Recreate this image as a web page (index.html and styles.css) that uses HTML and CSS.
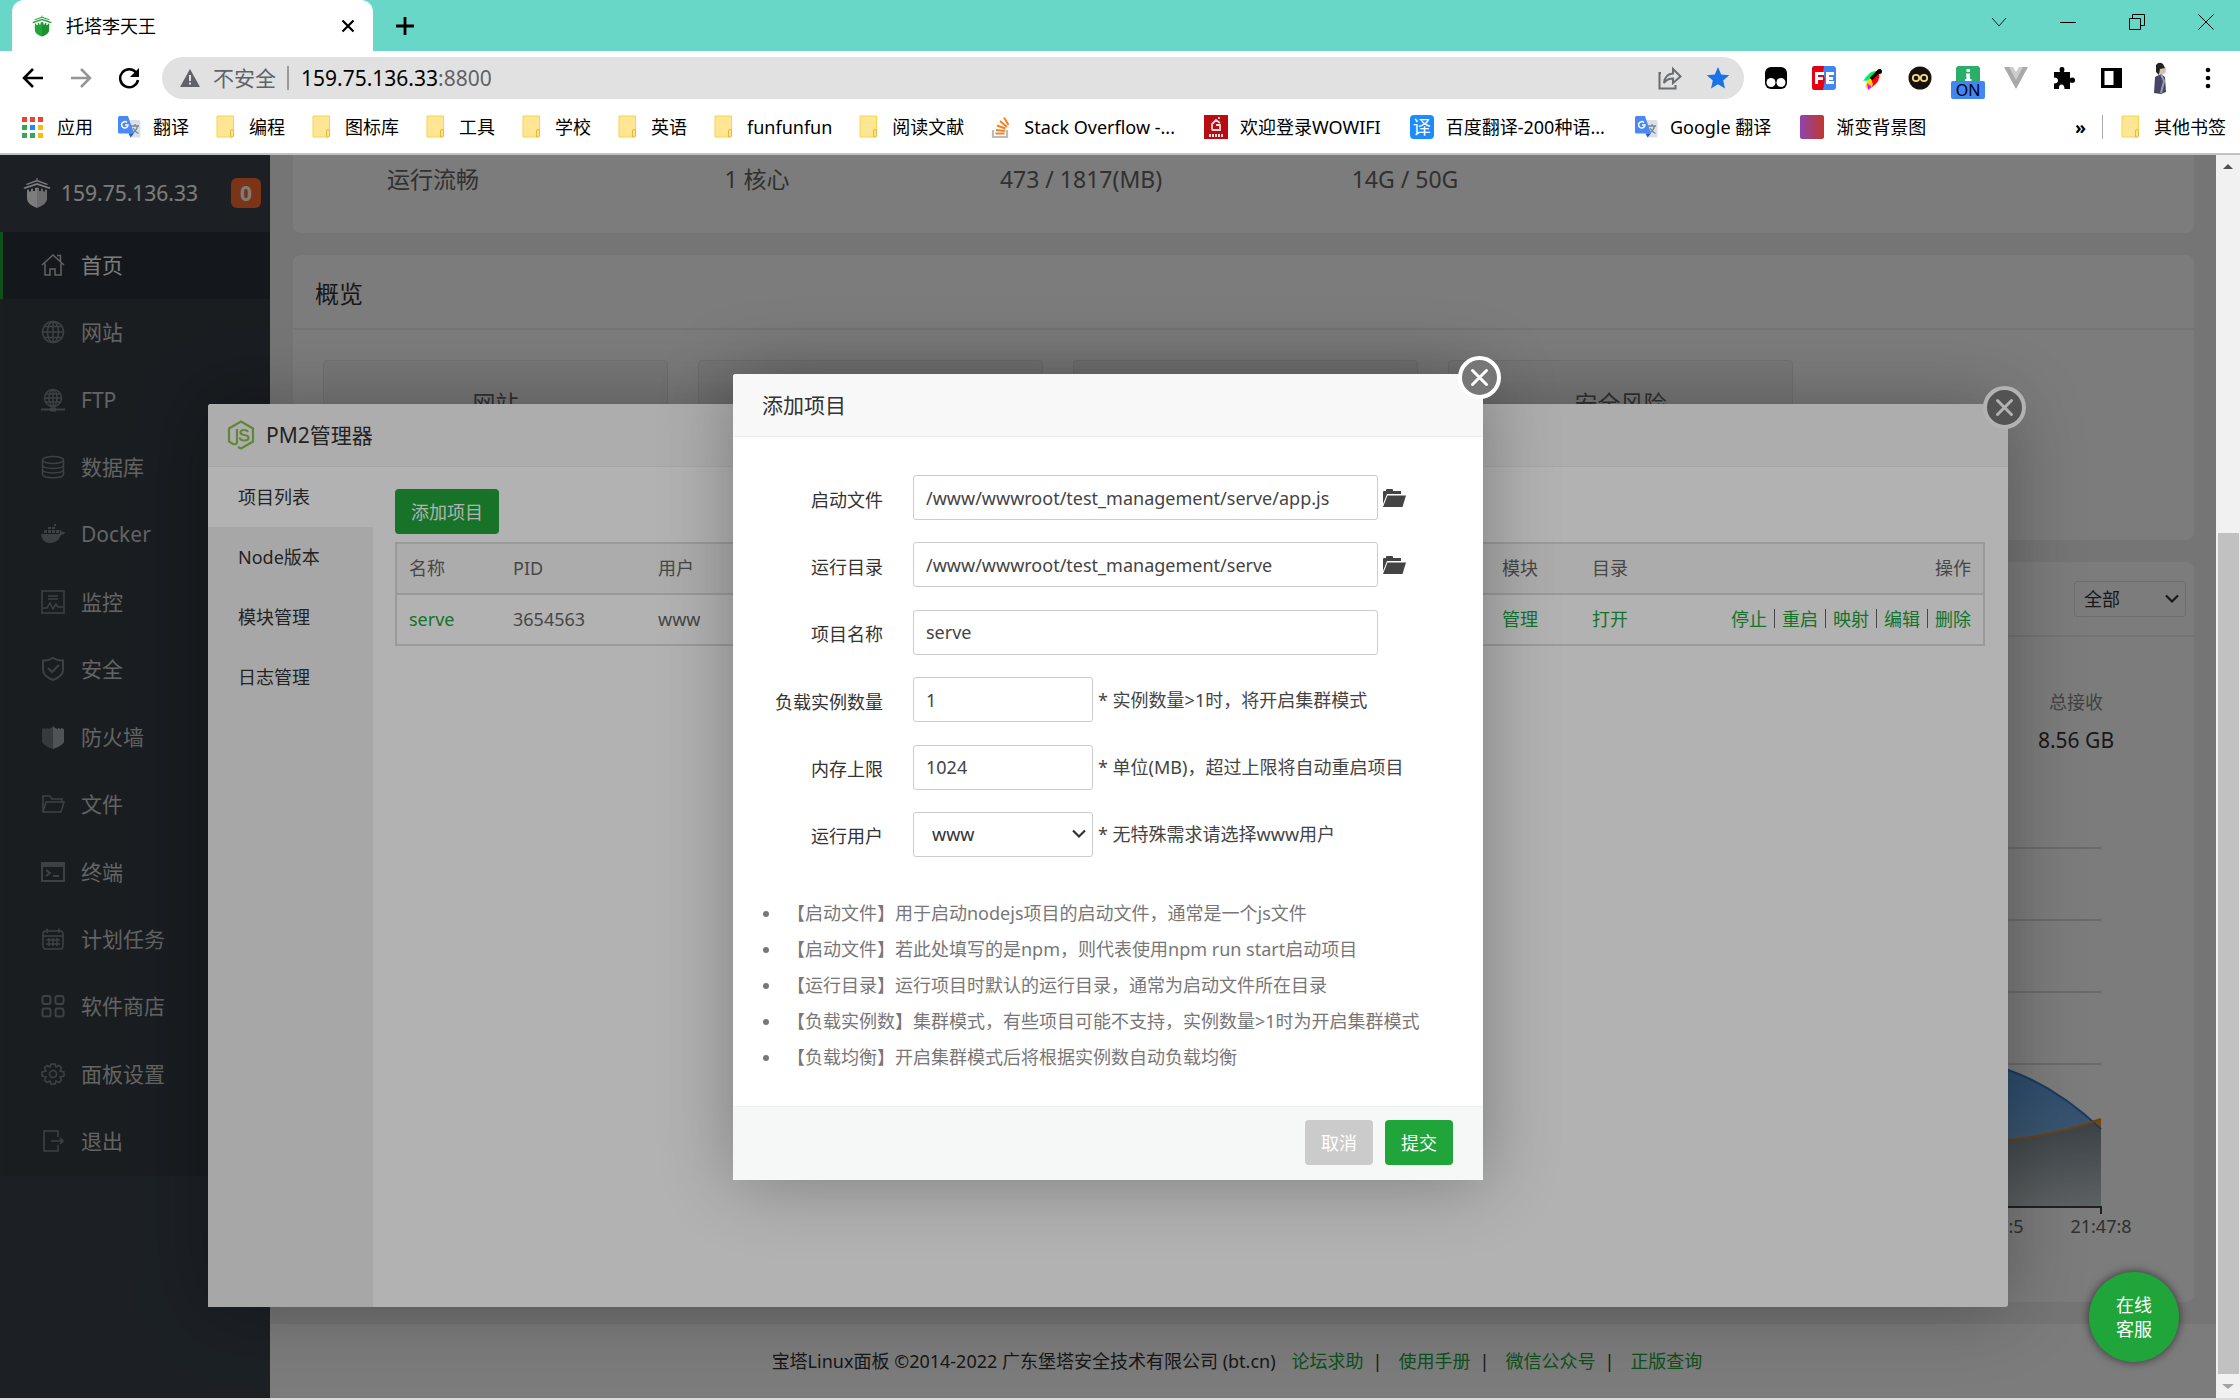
FILE: index.html
```html
<!DOCTYPE html>
<html lang="zh-CN">
<head>
  <meta charset="UTF-8" />
  <meta name="viewport" content="width=device-width, initial-scale=1.0"/>
  <title>托塔李天王</title>
  <link rel="stylesheet" href="styles.css">
</head>
<body>
  <!-- shared icons -->
  <svg class="defs" width="0" height="0">
    <symbol id="folder" viewBox="0 0 24 24">
      <path d="M4 1h16.500v20l-1 1H4z" fill="#ffe694" stroke="#f8d448" stroke-width="1"/>
      <path d="M17.500 22v-6q0-1.500 1.500-1.500T20.500 16v5l-1 1z" fill="#ffe28a" stroke="#e9b93a"/>
    </symbol>
    <symbol id="gtrans" viewBox="0 0 24 24">
      <path d="M9 5h13q1.500 0 1.500 1.500V21q0 1.500-1.500 1.500H14z" fill="#dcdfe3"/>
      <path d="M14 11h8M18 9v2M20.500 11q-1 5-5.500 7M16 13q2 4 5.500 5.500" fill="none" stroke="#76859c" stroke-width="1.300"/>
      <path d="M2.500 1h8.500l6 17.500H2.500Q1 18.500 1 17V2.500Q1 1 2.500 1z" fill="#4a89f3"/>
      <path d="M11.500 18.500H17l-3.500 4z" fill="#2a56c6"/>
      <path d="M10 7.500A3.200 3.200 0 1 0 11 10H8" fill="none" stroke="#fff" stroke-width="1.500"/>
    </symbol>
    <symbol id="tower" viewBox="0 0 28 30">
      <path d="M13.500 0h1v2L25 6l-1 1-10-3.500L4 7 3 6l10.500-4z"/>
      <path d="M14 5l13.500 4.500-1 1.500L14 7 1.500 11l-1-1.500z"/>
      <path d="M4 12l2-.5v2h2V11l2-.5V13h2v-3l2-.5 2 .5v3h2v-2.500l2 .5v2.500h2v-2l2 .5V21q0 5-10 9Q4 26 4 21z"/>
      <path d="M14 9.500l2 .5v3h2v-2.500l2 .5v2.500h2v-2l2 .5V21q0 5-10 9z" fill="#000" opacity="0.120"/>
    </symbol>
    <symbol id="open-folder" viewBox="0 0 24 20">
      <path d="M1 16V4q0-1 1-1h2V2q0-1 1-1h5q1 0 1 1v1h8v3H5z"/>
      <path d="M5.500 7.500H24L20.500 19H1z"/>
    </symbol>
    <symbol id="chevron" viewBox="0 0 16 10">
      <path d="M2 1.500l6 6 6-6" fill="none" stroke="currentColor" stroke-width="2.200"/>
    </symbol>
    <symbol id="close" viewBox="0 0 45 45">
      <circle cx="22.500" cy="22.500" r="19.500" fill="#777" stroke="#fff" stroke-width="4"/>
      <path d="M15.500 15.500l14 14M29.500 15.500l-14 14" stroke="#fff" stroke-width="3" stroke-linecap="round"/>
    </symbol>
  </svg>

  <header class="browser">
    <div class="tabstrip">
      <div class="tab">
        <svg class="tab-icon" viewBox="0 0 28 30" fill="#20a53a"><use href="#tower"/></svg>
        <span class="tab-title">托塔李天王</span>
        <button class="icon-btn" aria-label="关闭标签页"><svg width="14" height="14" viewBox="0 0 14 14" stroke="#000" stroke-width="2.200"><path d="M1.500 1.500l11 11M12.500 1.500l-11 11"/></svg></button>
      </div>
      <button class="icon-btn new-tab" aria-label="新标签页"><svg width="20" height="20" viewBox="0 0 20 20" stroke="#000" stroke-width="2.800"><path d="M10 1v18M1 10h18"/></svg></button>
      <div class="window-btns">
        <button class="icon-btn" aria-label="搜索标签页"><svg width="16" height="16" viewBox="0 0 16 16" fill="none" stroke="#123"><path d="M1 4l7 8 7-8"/></svg></button>
        <button class="icon-btn" aria-label="最小化"><svg width="16" height="16" viewBox="0 0 16 16" stroke="#000"><path d="M0 8.500h16"/></svg></button>
        <button class="icon-btn" aria-label="还原"><svg width="16" height="16" viewBox="0 0 16 16" fill="none" stroke="#000"><path d="M.5 4.500h11v11H.5zM3.500 4V.5h12v11H12"/></svg></button>
        <button class="icon-btn" aria-label="关闭"><svg width="16" height="16" viewBox="0 0 16 16" stroke="#000"><path d="M.5.500l15 15M15.500.500l-15 15"/></svg></button>
      </div>
    </div>

    <div class="toolbar">
      <button class="icon-btn" aria-label="后退"><svg width="22" height="20" viewBox="0 0 22 20" fill="none" stroke="#000" stroke-width="2.500"><path d="M21 10H2M11 1l-9 9 9 9"/></svg></button>
      <button class="icon-btn" aria-label="前进"><svg width="22" height="20" viewBox="0 0 22 20" fill="none" stroke="#959595" stroke-width="2.500"><path d="M1 10h19M11 1l9 9-9 9"/></svg></button>
      <button class="icon-btn" aria-label="刷新"><svg width="22" height="22" viewBox="0 0 22 22"><path d="M18.500 6A9 9 0 1 0 20 13" fill="none" stroke="#000" stroke-width="2.500"/><path d="M21 1v9h-9z"/></svg></button>
      <div class="address">
        <svg width="20" height="18" viewBox="0 0 20 18"><path d="M10 0l10 18H0z" fill="#5f6368"/><path d="M9 6h2v6H9zM9 13.500h2v2H9z" fill="#e1e1e1"/></svg>
        <span class="insecure">不安全</span>
        <span class="url">159.75.136.33<span class="port">:8800</span></span>
        <button class="icon-btn" aria-label="分享"><svg width="24" height="24" viewBox="0 0 24 24" fill="none" stroke="#6a6d70" stroke-width="2"><path d="M3 7H1.500v15.500h16V19"/><path d="M6 17q1-9 9-9.500V3l7.500 7.500L15 17v-4.500q-6 0-9 4.500z"/></svg></button>
        <button class="icon-btn" aria-label="收藏"><svg width="24" height="24" viewBox="0 0 24 24" fill="#1a73e8"><path d="M12 1l3.200 7.400 8 .8-6 5.300 1.800 7.900-7-4.200-7 4.200 1.800-7.900-6-5.300 8-.8z"/></svg></button>
      </div>
      <div class="extensions">
        <svg viewBox="0 0 24 24"><rect x="1" y="1" width="22" height="22" rx="6"/><circle cx="7" cy="16.500" r="4.500" fill="#fff"/><circle cx="17" cy="16.500" r="4.500" fill="#fff"/></svg>
        <svg viewBox="0 0 24 24"><rect width="24" height="24" rx="3" fill="#4285f4"/><path d="M3 0h9l-1 7 2 6-2 11H3q-3 0-3-3V3q0-3 3-3z" fill="#e60012"/><path d="M4.500 18V7.500H12M4.500 12.500H11M22 7.500h-6.500v9H22M16 12.500h5" fill="none" stroke="#fff" stroke-width="3"/></svg>
        <svg viewBox="0 0 24 24"><path d="M18 5Q9 5 3 15l8-2z" fill="#00e5e5"/><path d="M18 5q-7 0-9 3l-4 7 6-1z" fill="#00f050"/><path d="M19 7q2 8-7 14l-2-9z" fill="#f00"/><path d="M11 12l2 7-5 3-3-1 3-7z" fill="#ffd800"/><path d="M7 17l5 4-4 3z" fill="#f0f"/><path d="M19 5l-8 8" stroke="#000" stroke-width="3.500"/><circle cx="19.500" cy="5.500" r="2.500"/><path d="M19 5l2-2" stroke="#000"/></svg>
        <svg viewBox="0 0 24 24"><circle cx="12" cy="12" r="11.500" fill="#17110d"/><circle cx="8" cy="12" r="3.200" fill="none" stroke="#f5d77e" stroke-width="1.800"/><circle cx="16" cy="12" r="3.200" fill="none" stroke="#f5d77e" stroke-width="1.800"/></svg>
        <span class="ext-on">
          <svg viewBox="0 0 24 24"><rect width="24" height="24" rx="3" fill="#2bae66"/><path d="M10.500 3H14v3h-3.500zM10 7.500h4V13h1.500v3H9v-3h1.500z" fill="#fff"/></svg>
          <b>ON</b>
        </span>
        <svg viewBox="0 0 24 24"><path d="M0 1h7l5 9 5-9h7L12 23z" fill="#a9a9a9"/><path d="M5 1h4l3 5 3-5h4l-7 13z" fill="#ccc"/></svg>
        <svg viewBox="0 0 24 24"><path d="M2 6h6q-1.500-5 2-5t2 5h6v6q5-1.500 5 2.200t-5 2.200V23h-5.500q0-4.500-3-4.500T7 23H2v-5.500q4 0 4-3t-4-3z"/></svg>
        <svg viewBox="0 0 24 24"><path d="M1 2h21v20H1zM4.500 5v14h9V5z" fill-rule="evenodd"/></svg>
        <svg viewBox="0 0 16 32" class="avatar"><path d="M3 15l6-3 4 3 1 15-5 2-7-1z" fill="#474563"/><path d="M9 12l3 7-3 12" stroke="#9b99b3" stroke-width="2" fill="none"/><circle cx="10" cy="8" r="4" fill="#d9bfae"/><path d="M4 3q3-4 7-1l2 4-5 1-1 6-3-3z" fill="#222"/></svg>
        <svg viewBox="0 0 24 24"><circle cx="12" cy="4" r="2.300"/><circle cx="12" cy="12" r="2.300"/><circle cx="12" cy="20" r="2.300"/></svg>
      </div>
    </div>

    <nav class="bookmarks">
      <a href="#"><svg viewBox="0 0 24 24"><path d="M1 2h5v5H1z" fill="#ea4335"/><path d="M9 2h5v5H9z" fill="#ea4335"/><path d="M17 2h5v5h-5z" fill="#ea4335"/><path d="M1 10h5v5H1z" fill="#34a853"/><path d="M9 10h5v5H9z" fill="#1a8cff"/><path d="M17 10h5v5h-5z" fill="#fbbc04"/><path d="M1 18h5v5H1z" fill="#34a853"/><path d="M9 18h5v5H9z" fill="#34a853"/><path d="M17 18h5v5h-5z" fill="#fbbc04"/></svg>应用</a>
      <a href="#"><svg><use href="#gtrans"/></svg>翻译</a>
      <a href="#"><svg><use href="#folder"/></svg>编程</a>
      <a href="#"><svg><use href="#folder"/></svg>图标库</a>
      <a href="#"><svg><use href="#folder"/></svg>工具</a>
      <a href="#"><svg><use href="#folder"/></svg>学校</a>
      <a href="#"><svg><use href="#folder"/></svg>英语</a>
      <a href="#"><svg><use href="#folder"/></svg>funfunfun</a>
      <a href="#"><svg><use href="#folder"/></svg>阅读文献</a>
      <a href="#" class="site"><svg viewBox="0 0 24 24" fill="none"><path d="M5 15v7h14v-7" stroke="#bcbbbb" stroke-width="2.200"/><path d="M7.500 18.500h9M8 15l9 1M9 10.500l8.500 3M12 6l7 6M16 2.500l4.500 7.500" stroke="#f48024" stroke-width="2"/></svg>Stack Overflow -...</a>
      <a href="#" class="site"><svg viewBox="0 0 24 24"><path d="M0 0h24v24H0z" fill="#b80b12"/><path d="M16 8l-4-3-4 4v5q0 1 1 1h7v-5h-4M15 4V2" fill="none" stroke="#f6d9d9" stroke-width="1.800"/><path d="M5 20.500h14" stroke="#f6d9d9" stroke-width="3" stroke-dasharray="2 1"/></svg>欢迎登录WOWIFI</a>
      <a href="#" class="site"><span class="yi">译</span>百度翻译-200种语...</a>
      <a href="#" class="site"><svg><use href="#gtrans"/></svg>Google 翻译</a>
      <a href="#"><span class="gradient"></span>渐变背景图</a>
      <span class="more">»</span>
      <a href="#" class="other"><svg><use href="#folder"/></svg>其他书签</a>
    </nav>
  </header>

  <div class="viewport">
    <div class="panel">
      <aside class="sidebar">
        <div class="server">
          <svg width="28" height="30" fill="#fff"><use href="#tower"/></svg>
          <span>159.75.136.33</span>
          <b class="msg">0</b>
        </div>
        <nav class="menu">
          <a href="#" class="active"><svg viewBox="0 0 24 24"><path d="M1 12L12 2l11 10M4 10.500V22h5v-6h5v6h6V10.500M16 2.500h3.500V8"/></svg>首页</a>
          <a href="#"><svg viewBox="0 0 24 24"><circle cx="12" cy="12" r="10.500"/><path d="M12 1.500v21M1.500 12h21M3.500 6.500h17M3.500 17.500h17"/><ellipse cx="12" cy="12" rx="5.500" ry="10.500"/></svg>网站</a>
          <a href="#"><svg viewBox="0 0 24 24"><circle cx="12" cy="10" r="8.500"/><path d="M12 1.500v20M3.500 10h17M5 6h14M5 14h14"/><ellipse cx="12" cy="10" rx="4" ry="8.500"/><path d="M0 21.500h24" stroke-width="2"/><path d="M9 21.500h6" stroke-width="4"/></svg>FTP</a>
          <a href="#"><svg viewBox="0 0 24 24"><ellipse cx="12" cy="5" rx="10.500" ry="3.500"/><path d="M1.500 5v14c0 5 21 5 21 0V5M1.500 10c0 4.500 21 4.500 21 0M1.500 14.500c0 4.500 21 4.500 21 0"/></svg>数据库</a>
          <a href="#"><svg viewBox="0 0 24 24" class="solid"><path d="M0 12h18q1-1 .500-4 2 0 2.500 2h3q-1 3-4 3-3 8-11 8Q1 21 0 12zM3 8h3v3H3zM7 8h3v3H7zM11 8h3v3h-3zM15 8h3v3h-3zM7 5h3v2H7zM11 5h3v2h-3zM13 2h2v2h-2z"/></svg>Docker</a>
          <a href="#"><svg viewBox="0 0 24 24"><path d="M1 1h22v22H1zM7 6h10M7 9h10M2 18h4l3-5 3 6 3-5 2 3h5"/></svg>监控</a>
          <a href="#"><svg viewBox="0 0 24 24"><path d="M12 1q5 3 10 2.500V13q0 6-10 10Q2 19 2 13V3.500Q7 4 12 1z" stroke-width="2"/><path d="M7 11l4 4 7-7" stroke-width="2"/></svg>安全</a>
          <a href="#"><svg viewBox="0 0 24 24" class="solid"><path d="M1 4l3-1v1l3-1v1l3-1 2-2v23Q3 21 1 17z" opacity="0.800"/><path d="M12 1l2 2 3 1V3l3 1V3l3 1v13q-2 4-11 7z" fill="#a5aaad"/></svg>防火墙</a>
          <a href="#"><svg viewBox="0 0 24 24"><path d="M2 20V4h7l2 3h10v3M2 20l3-10h18l-3 10z"/></svg>文件</a>
          <a href="#"><svg viewBox="0 0 24 24"><path d="M1 3h22v18H1z" stroke-width="2"/><path d="M1 5h22" stroke-width="4"/><path d="M5 10l4 3-4 3M12 16h6" stroke-width="2"/></svg>终端</a>
          <a href="#"><svg viewBox="0 0 24 24"><rect x="2" y="4" width="20" height="18" rx="3"/><path d="M2 9h20M6 1.500V6M18 1.500V6M5 13h14M5 17h14M8 11v8M12 11v8M16 11v8"/></svg>计划任务</a>
          <a href="#"><svg viewBox="0 0 24 24"><g stroke-width="2"><rect x="1.500" y="2" width="8" height="8" rx="2"/><rect x="14.500" y="2" width="8" height="8" rx="2"/><rect x="1.500" y="14.500" width="8" height="8" rx="2"/><rect x="14.500" y="14.500" width="8" height="8" rx="2"/></g></svg>软件商店</a>
          <a href="#"><svg viewBox="0 0 24 24"><path d="M10 2h4l1 3 3-1.500L20.500 6 19 9l4 1v4l-4 1 1.500 3-2.500 2.500L15 19l-1 3h-4l-1-3-3 1.500L3.500 18 5 15l-4-1v-4l4-1-1.500-3L6 3.500 9 5z"/><circle cx="12" cy="12" r="3.500"/></svg>面板设置</a>
          <a href="#"><svg viewBox="0 0 24 24"><path d="M17 8V2H3v20h14v-6M10 12h12M19 9l3 3-3 3"/></svg>退出</a>
        </nav>
      </aside>

      <main class="main">
        <section class="card load">
          <div>运行流畅</div>
          <div>1 核心</div>
          <div>473 / 1817(MB)</div>
          <div>14G / 50G</div>
        </section>

        <section class="card">
          <h2 class="card-head">概览</h2>
          <div class="overview">
            <div>网站</div>
            <div></div>
            <div></div>
            <div>安全风险</div>
          </div>
        </section>

        <section class="card flow">
          <div class="card-head">
            <div class="select net">
              <select aria-label="网卡"><option>全部</option></select>
              <svg width="16" height="10"><use href="#chevron"/></svg>
            </div>
          </div>
          <div class="total">
            <span>总接收</span>
            <strong>8.56 GB</strong>
          </div>
          <svg class="chart" width="400" height="420" viewBox="0 0 400 420">
            <defs>
              <linearGradient id="down" x1="0" y1="0" x2="0" y2="1"><stop offset="0" stop-color="#5a9ce0"/><stop offset="1" stop-color="#9cc6ee"/></linearGradient>
              <linearGradient id="both" x1="0" y1="0" x2="0" y2="1"><stop offset="0" stop-color="#79878f"/><stop offset="1" stop-color="#bfc8ca"/></linearGradient>
            </defs>
            <path d="M0 28h341M0 100h341M0 172h341M0 244h341" stroke="#ddd" stroke-width="2"/>
            <path d="M0 250H248Q295 266 341 309V387H0z" fill="url(#down)"/>
            <path d="M0 320H248Q296 315 341 299V387H0z" fill="url(#both)"/>
            <path d="M329 301l12-2v10z" fill="#f0952a"/>
            <path d="M0 250H248Q295 266 341 309" fill="none" stroke="#3a78c0" stroke-width="2"/>
            <path d="M0 320H248Q296 315 341 299" fill="none" stroke="#d98a2b" stroke-width="2"/>
            <path d="M0 387h341v7" fill="none" stroke="#444" stroke-width="2"/>
            <text x="233" y="413" text-anchor="middle">21:47:5</text>
            <text x="341" y="413" text-anchor="middle">21:47:8</text>
          </svg>
        </section>

        <footer class="footer">
          <span>宝塔Linux面板 ©2014-2022 广东堡塔安全技术有限公司 (bt.cn)</span>
          <a href="#">论坛求助</a>|
          <a href="#">使用手册</a>|
          <a href="#">微信公众号</a>|
          <a href="#">正版查询</a>
        </footer>
      </main>

      <div class="shade"></div>
      <div class="layer pm2">
        <button class="layer-close" aria-label="关闭"><svg width="45" height="45"><use href="#close"/></svg></button>
        <h3 class="layer-title">
          <svg width="28" height="30" viewBox="0 0 28 30" fill="none" stroke="#8cc152" stroke-width="2.200"><path d="M11 27l3 1.500 12-7V8.500L14 1.500 2 8.500v13l4 2.500q4 1 4-2V9"/><path d="M21 12q-1-2-4-2-3.500 0-3.500 2.500 0 2 3.500 2.500 4.500.5 4.500 3T17 20.500q-4 0-4-3"/></svg>
          PM2管理器
        </h3>
        <div class="pm2-body">
          <nav class="pm2-nav">
            <a href="#" class="on">项目列表</a>
            <a href="#">Node版本</a>
            <a href="#">模块管理</a>
            <a href="#">日志管理</a>
          </nav>
          <div class="pm2-main">
            <button class="btn">添加项目</button>
            <table>
              <thead>
                <tr><th class="c-name">名称</th><th class="c-pid">PID</th><th>用户</th><th class="c-mod">模块</th><th class="c-dir">目录</th><th class="c-ops">操作</th></tr>
              </thead>
              <tbody>
                <tr>
                  <td><a href="#">serve</a></td>
                  <td>3654563</td>
                  <td>www</td>
                  <td><a href="#">管理</a></td>
                  <td><a href="#">打开</a></td>
                  <td class="c-ops">
                    <div class="ops"><a href="#">停止</a><i></i><a href="#">重启</a><i></i><a href="#">映射</a><i></i><a href="#">编辑</a><i></i><a href="#">删除</a></div>
                  </td>
                </tr>
              </tbody>
            </table>
          </div>
        </div>
      </div>

      <div class="shade"></div>
      <form class="layer add">
        <button type="button" class="layer-close" aria-label="关闭"><svg width="45" height="45"><use href="#close"/></svg></button>
        <h3 class="layer-title">添加项目</h3>
        <div class="fields">
          <div class="line">
            <label for="run">启动文件</label>
            <input type="text" id="run" value="/www/wwwroot/test_management/serve/app.js">
            <button type="button" class="icon-btn pick" aria-label="选择文件"><svg width="24" height="20"><use href="#open-folder"/></svg></button>
          </div>
          <div class="line">
            <label for="path">运行目录</label>
            <input type="text" id="path" value="/www/wwwroot/test_management/serve">
            <button type="button" class="icon-btn pick" aria-label="选择目录"><svg width="24" height="20"><use href="#open-folder"/></svg></button>
          </div>
          <div class="line">
            <label for="pname">项目名称</label>
            <input type="text" id="pname" value="serve">
          </div>
          <div class="line">
            <label for="count">负载实例数量</label>
            <input type="text" id="count" class="short" value="1">
            <span class="hint">* 实例数量&gt;1时，将开启集群模式</span>
          </div>
          <div class="line">
            <label for="memory">内存上限</label>
            <input type="text" id="memory" class="short" value="1024">
            <span class="hint">* 单位(MB)，超过上限将自动重启项目</span>
          </div>
          <div class="line">
            <label for="user">运行用户</label>
            <div class="select short">
              <select id="user"><option>www</option><option>root</option></select>
              <svg width="16" height="10"><use href="#chevron"/></svg>
            </div>
            <span class="hint">* 无特殊需求请选择www用户</span>
          </div>
        </div>
        <ul class="help">
          <li>【启动文件】用于启动nodejs项目的启动文件，通常是一个js文件</li>
          <li>【启动文件】若此处填写的是npm，则代表使用npm run start启动项目</li>
          <li>【运行目录】运行项目时默认的运行目录，通常为启动文件所在目录</li>
          <li>【负载实例数】集群模式，有些项目可能不支持，实例数量&gt;1时为开启集群模式</li>
          <li>【负载均衡】开启集群模式后将根据实例数自动负载均衡</li>
        </ul>
        <div class="actions">
          <button type="button" class="btn cancel">取消</button>
          <button type="submit" class="btn">提交</button>
        </div>
      </form>

      <button class="service">在线<br>客服</button>
    </div>

    <div class="scrollbar">
      <svg width="24" height="24" viewBox="0 0 24 24"><path d="M7 14l5-5 5 5z" fill="#505050"/></svg>
      <div class="thumb"></div>
      <svg width="24" height="24" viewBox="0 0 24 24"><path d="M6 10l6 5 6-5z" fill="#a3a3a3"/></svg>
    </div>
  </div>
</body>
</html>
```

FILE: styles.css
```css
:root {
  --green: #20a53a;
  --strip: #68d7c8;
  --text: #333;
  --muted: #666;
  --line: #ccc;
}

* {
  box-sizing: border-box;
  margin: 0;
  padding: 0;
}

html, body {
  height: 100%;
}

body {
  display: flex;
  flex-direction: column;
  overflow: hidden;
  font-family: "Noto Sans", "Noto Sans CJK SC", sans-serif;
  font-size: 18px;
  line-height: 24px;
  color: var(--text);
  background: #dcdcdc;
}

button, input, select {
  font: inherit;
  color: inherit;
}

a {
  color: var(--green);
  text-decoration: none;
}

.defs {
  position: absolute;
}

.icon-btn {
  display: flex;
  align-items: center;
  justify-content: center;
  border: none;
  background: none;
  cursor: pointer;
}

/* browser frame */
.browser {
  flex: none;
  background: #fff;
  color: #000;
  border-bottom: 2px solid #c2c2c2;
}

.tabstrip {
  display: flex;
  align-items: center;
  height: 51px;
  padding-left: 12px;
  background: var(--strip);
}

.tab {
  display: flex;
  align-items: center;
  width: 361px;
  height: 51px;
  padding: 0 18px 0 20px;
  background: #fff;
  border-radius: 12px 12px 0 0;
}

.tab-icon {
  width: 20px;
  height: 22px;
  margin-right: 14px;
}

.tab-title {
  flex: 1;
}

.new-tab {
  margin-left: 22px;
}

.window-btns {
  display: flex;
  align-self: flex-start;
  margin-left: auto;
}

.window-btns .icon-btn {
  width: 69px;
  height: 43px;
}

.toolbar {
  display: flex;
  align-items: center;
  gap: 26px;
  height: 54px;
  padding: 0 20px 0 22px;
}

.address {
  display: flex;
  align-items: center;
  flex: 1;
  height: 42px;
  margin-right: 10px;
  margin-left: -4px;
  padding: 0 14px 0 18px;
  border-radius: 21px;
  background: #e1e1e1;
  font-size: 21px;
}

.insecure {
  margin-left: 13px;
  padding-right: 11px;
  border-right: 2px solid #9a9a9a;
  color: #5f6368;
}

.url {
  flex: 1;
  margin-left: 12px;
}

.port {
  color: #5f6368;
}

.address .icon-btn {
  margin-left: 24px;
}

.extensions {
  display: flex;
  align-items: center;
  gap: 24px;
  margin-left: -16px;
}

.extensions svg {
  width: 24px;
  height: 24px;
}

.extensions .avatar {
  height: 32px;
}

.ext-on {
  position: relative;
  height: 24px;
}

.ext-on b {
  position: absolute;
  top: 15px;
  left: -5px;
  width: 34px;
  height: 18px;
  border-radius: 2px;
  background: #4285f4;
  font-size: 16px;
  font-weight: normal;
  line-height: 19px;
  text-align: center;
}

.bookmarks {
  display: flex;
  align-items: center;
  gap: 24px;
  height: 48px;
  padding: 0 14px 5px 21px;
  white-space: nowrap;
}

.bookmarks a {
  display: flex;
  align-items: center;
  gap: 12px;
  color: #000;
}

.bookmarks svg {
  width: 24px;
  height: 24px;
}

.bookmarks .site {
  padding-right: 5px;
}

.yi {
  width: 24px;
  border-radius: 4px;
  background: #1a8cff;
  color: #fff;
  text-align: center;
}

.gradient {
  width: 24px;
  height: 24px;
  border-radius: 2px;
  background: linear-gradient(90deg, #8e44ad, #c0392b);
}

.more {
  margin-left: auto;
  margin-right: -8px;
  font-weight: bold;
}

.other {
  padding-left: 15px;
  border-left: 1px solid #aaa;
}

/* page area */
.viewport {
  display: flex;
  flex: 1;
  min-height: 0;
  margin-bottom: 2px;
}

.panel {
  position: relative;
  display: flex;
  flex: 1;
  overflow: hidden;
  background: #f1f1f1;
}

.scrollbar {
  display: flex;
  flex-direction: column;
  width: 24px;
  background: #f1f1f1;
}

.thumb {
  flex: none;
  height: 841px;
  margin: auto 1px 0 2px;
  background: #c1c1c1;
}

.sidebar {
  width: 270px;
  background: #3c444d;
}

.server {
  display: flex;
  align-items: center;
  height: 77px;
  padding: 0 9px 2px 23px;
  color: #fff;
  font-size: 21px;
}

.server svg {
  margin-right: 10px;
}

.msg {
  width: 30px;
  margin-left: auto;
  border-radius: 6px;
  background: #ff6c2f;
  line-height: 30px;
  text-align: center;
}

.menu {
  display: grid;
  grid-auto-rows: 1fr;
  height: 944px;
  background: #353d44;
}

.menu a {
  display: flex;
  align-items: center;
  gap: 16px;
  padding: 0 0 2px 38px;
  border-left: 3px solid #3a3d40;
  color: #ccc;
  font-size: 21px;
}

.menu svg {
  width: 24px;
  height: 24px;
  fill: none;
  stroke: #81868b;
  stroke-width: 1.5;
}

.menu .solid {
  fill: #81868b;
  stroke: none;
}

.menu .active {
  border-color: var(--green);
  background: #2c3138;
  color: #fff;
}

.menu .active svg {
  stroke: #ccc;
}

.main {
  display: flex;
  flex-direction: column;
  flex: 1;
}

.card {
  margin: 0 22px 22px 23px;
  border-radius: 8px;
  background: #fff;
}

.card-head {
  display: flex;
  align-items: center;
  justify-content: flex-end;
  height: 75px;
  padding: 0 8px 0 22px;
  border-bottom: 2px solid #eee;
}

h2.card-head {
  justify-content: flex-start;
  padding-top: 4px;
  font-size: 24px;
  font-weight: normal;
}

.load {
  display: flex;
  gap: 44px;
  height: 78px;
  padding-top: 12px;
  border-radius: 0 0 8px 8px;
  color: var(--muted);
  font-size: 23px;
}

.load div {
  width: 280px;
  text-align: center;
}

.overview {
  display: grid;
  grid-template-columns: repeat(5, 1fr);
  gap: 30px;
  padding: 30px 26px 30px 30px;
  color: var(--muted);
  font-size: 23px;
  text-align: center;
}

.overview div {
  height: 150px;
  padding-top: 30px;
  border: 1px solid #e8e8e8;
  border-radius: 4px;
  background: #f7f7f7;
}

.flow {
  flex: 1;
}

.select {
  position: relative;
}

.select select {
  width: 100%;
  height: 100%;
  padding-left: 12px;
  border: 1px solid var(--line);
  border-radius: 3px;
  background: transparent;
  appearance: none;
}

.select svg {
  position: absolute;
  top: 50%;
  right: 6px;
  margin-top: -5px;
  pointer-events: none;
}

.net {
  width: 112px;
  height: 36px;
}

.net select {
  padding-left: 9px;
  border-color: #e2e2e2;
}

.total {
  display: flex;
  flex-direction: column;
  align-items: center;
  gap: 14px;
  width: 236px;
  margin: 53px 0 0 auto;
  color: #888;
}

.total strong {
  color: var(--text);
  font-size: 21px;
  font-weight: normal;
}

.chart {
  display: block;
  margin: 68px 34px 0 auto;
  font-size: 18px;
  fill: #666;
}

.footer {
  display: flex;
  align-items: center;
  justify-content: center;
  gap: 9px;
  height: 74px;
  padding-right: 12px;
  background: #fff;
}

.footer a {
  margin-left: 7px;
}

/* dialogs */
.shade {
  position: absolute;
  inset: 0;
  background: rgba(0, 0, 0, 0.3);
}

.layer {
  position: absolute;
  left: 50%;
  transform: translateX(-50%);
  border-radius: 3px;
  background: #fff;
  box-shadow: 1px 1px 75px rgba(0, 0, 0, 0.3);
}

.layer-close {
  position: absolute;
  top: -19px;
  right: -19px;
  height: 45px;
  border: none;
  background: none;
  cursor: pointer;
}

.layer-title {
  display: flex;
  align-items: center;
  gap: 11px;
  height: 63px;
  border-bottom: 1px solid #eee;
  border-radius: 3px 3px 0 0;
  background: #f8f8f8;
  font-size: 21px;
  font-weight: normal;
}

.pm2 {
  top: 249px;
  width: 1800px;
}

.pm2 .layer-title {
  padding-left: 19px;
}

.pm2-body {
  display: flex;
  height: 840px;
}

.pm2-nav {
  width: 165px;
  background: #f0f0f0;
}

.pm2-nav a {
  display: block;
  padding-left: 30px;
  color: var(--text);
  line-height: 60px;
}

.pm2-nav .on {
  background: #fff;
}

.pm2-main {
  flex: 1;
  padding: 22px 23px 0 22px;
}

.btn {
  height: 45px;
  padding: 0 16px;
  border: none;
  border-radius: 4px;
  background: var(--green);
  color: #fff;
  cursor: pointer;
}

table {
  width: 100%;
  margin-top: 8px;
  border: 2px solid #ddd;
  border-collapse: collapse;
  table-layout: fixed;
  color: var(--muted);
}

th, td {
  height: 51px;
  padding: 0 12px 2px;
  border-bottom: 2px solid #ddd;
  font-weight: normal;
  text-align: left;
}

th {
  background: #f6f6f6;
}

.c-name {
  width: 105px;
}

.c-pid {
  width: 145px;
}

.c-mod {
  width: 90px;
}

.c-dir {
  width: 100px;
}

.c-ops {
  width: 304px;
  text-align: right;
}

.ops {
  display: flex;
  align-items: center;
  justify-content: flex-end;
  gap: 7px;
}

.ops i {
  width: 1px;
  height: 19px;
  background: var(--muted);
}

.add {
  top: 219px;
  width: 750px;
}

.add .layer-title {
  padding-left: 29px;
}

.fields {
  display: grid;
  align-content: space-between;
  height: 458px;
  padding: 38px 0;
}

.line {
  display: flex;
  align-items: center;
}

.line label {
  width: 150px;
  margin-right: 30px;
  padding-top: 4px;
  text-align: right;
}

.line input {
  width: 465px;
  height: 45px;
  padding: 0 12px;
  border: 1px solid var(--line);
  border-radius: 3px;
  color: #444;
}

.line .short {
  width: 180px;
  height: 45px;
}

.line .select select {
  padding-left: 18px;
}

.pick {
  margin-left: 4px;
  fill: #444;
}

.hint {
  margin-left: 5px;
  color: #444;
}

.help {
  padding: 0 0 31px 49px;
  color: #777;
  line-height: 36px;
}

.help li {
  padding-left: 5px;
}

.actions {
  display: flex;
  justify-content: flex-end;
  gap: 12px;
  height: 74px;
  padding: 13px 30px 0;
  border-top: 1px solid #edf1f2;
  background: #f6f8f8;
}

.cancel {
  background: #cbcbcb;
}

.service {
  position: absolute;
  right: 37px;
  bottom: 36px;
  width: 90px;
  height: 90px;
  border: none;
  border-radius: 50%;
  background: var(--green);
  box-shadow: 0 0 10px rgba(0, 0, 0, 0.6);
  color: #fff;
  cursor: pointer;
}
```
